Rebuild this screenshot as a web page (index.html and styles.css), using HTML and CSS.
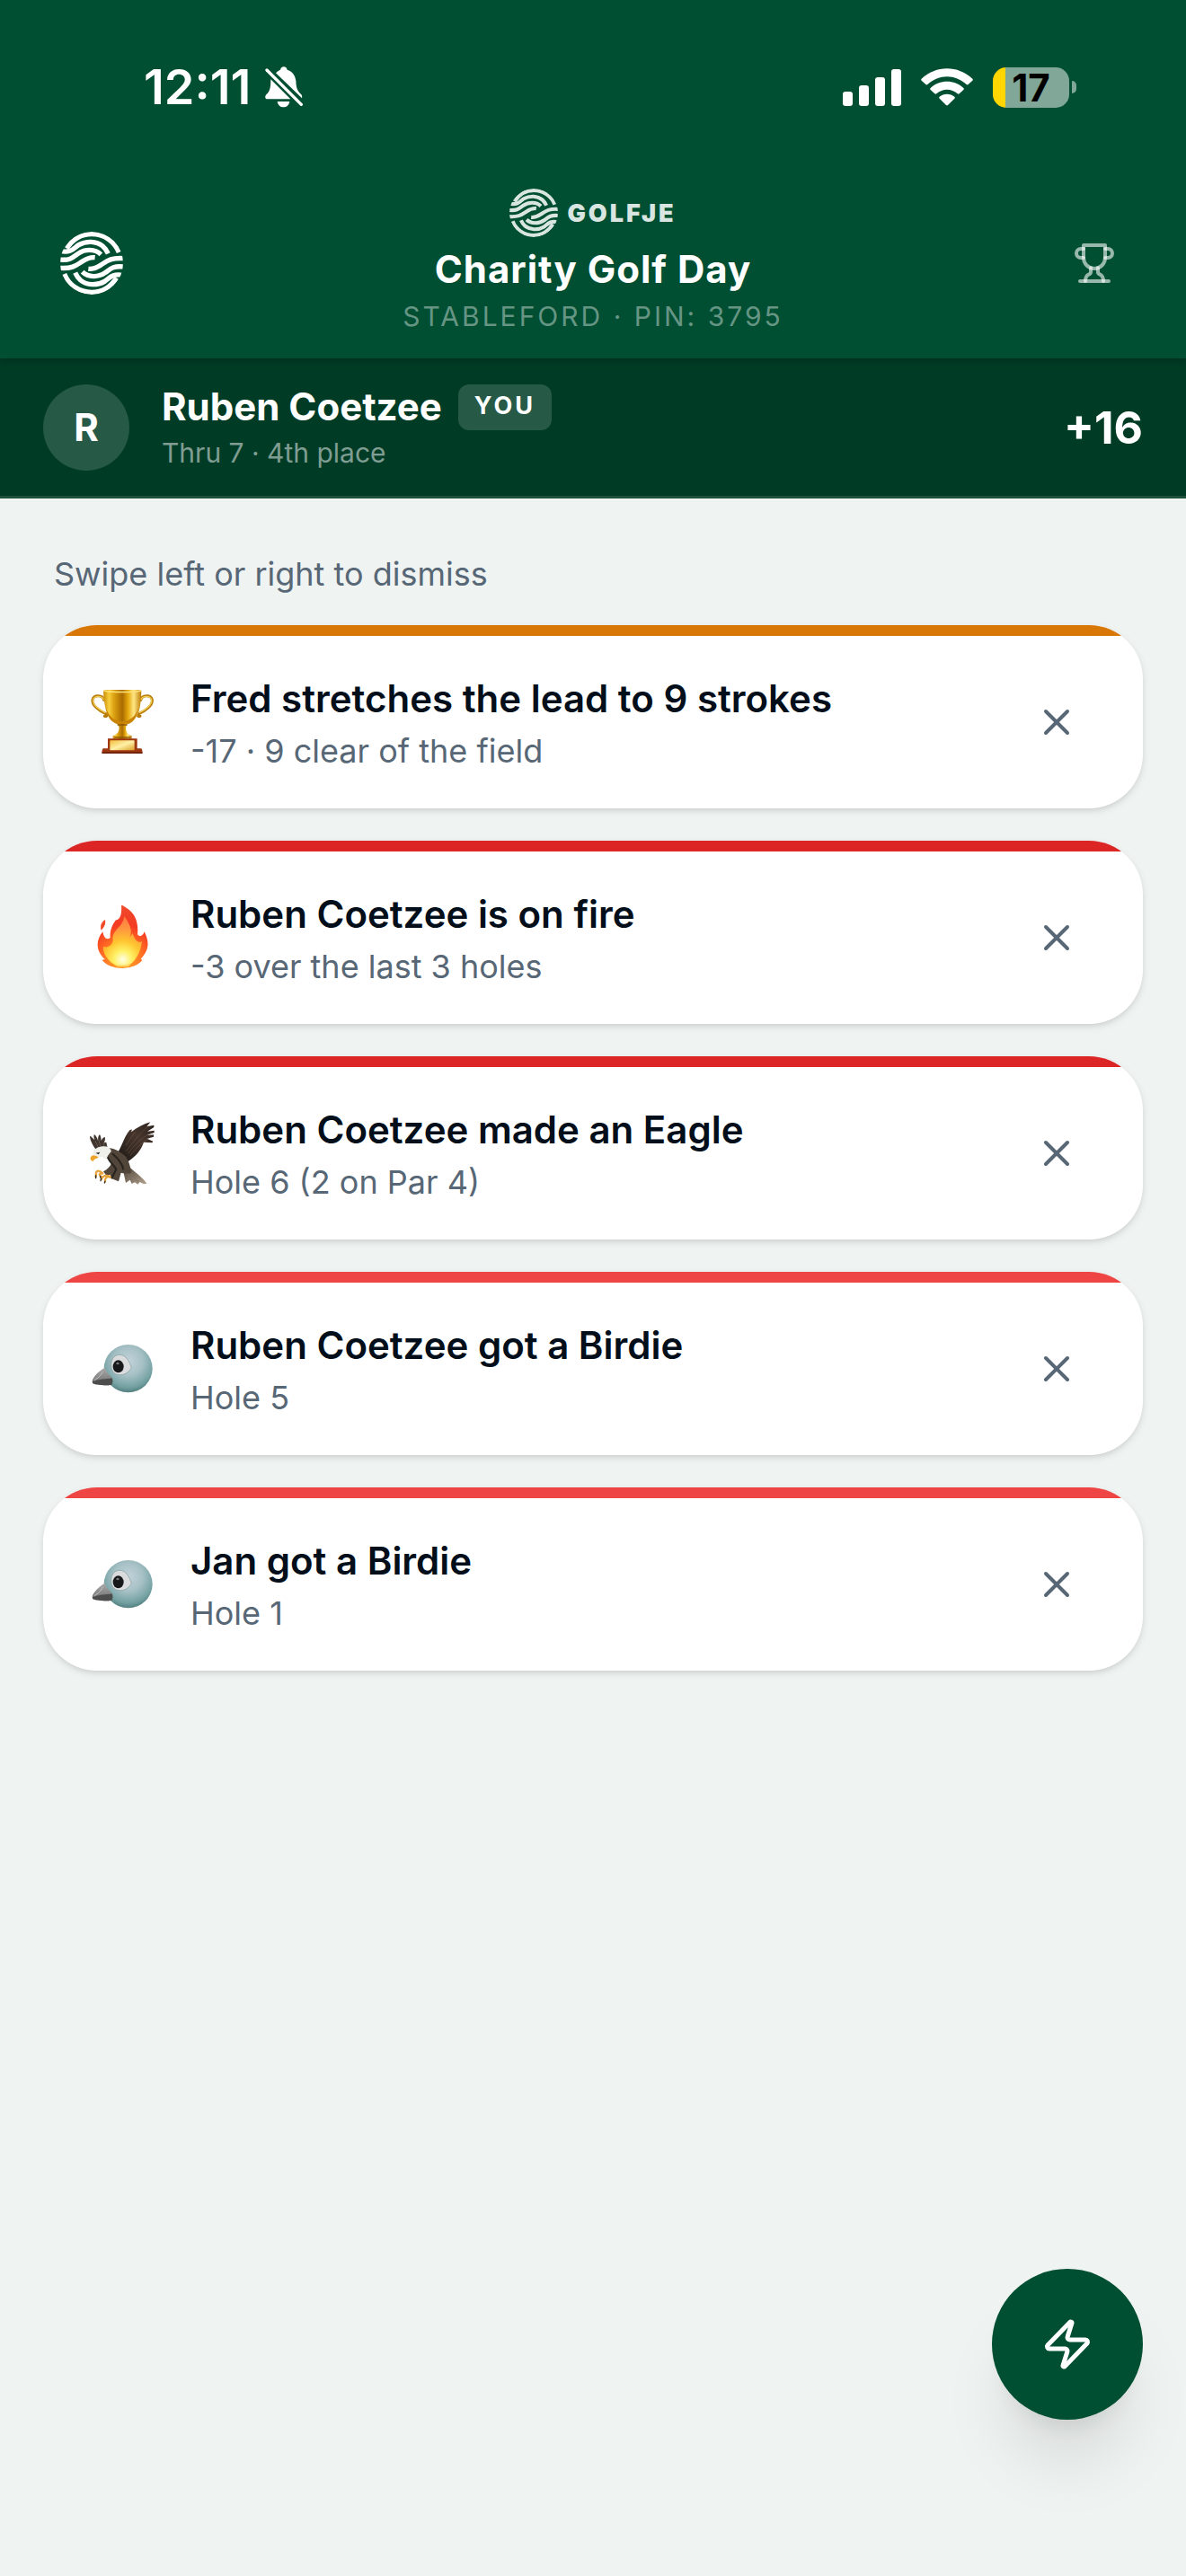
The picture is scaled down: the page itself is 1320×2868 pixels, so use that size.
FILE: index.html
```html
<!DOCTYPE html>
<html lang="en">
<head>
    <meta charset="UTF-8">
    <meta name="viewport" content="width=device-width, initial-scale=1.0">
    <title>Charity Golf Day</title>
    <link rel="stylesheet" href="styles.css">
</head>
<body>

    <!-- shared shapes -->
    <svg class="sprite" aria-hidden="true">
        <symbol id="logo" viewBox="0 0 210 210">
            <clipPath id="logoClip"><circle cx="105" cy="105" r="105"/></clipPath>
            <g clip-path="url(#logoClip)" fill="none" stroke="currentColor" stroke-width="16">
                <path d="M22 56C42 25 72 8 105 8C146 8 182 32 196 69"/>
                <path d="M0 65C40 72 45 54 62 44C88 29 121 31 142 48C149 54 155 62 160 73"/>
                <path d="M-2 93C36 97 44 84 60 73C82 58 116 56 136 76"/>
                <path d="M-2 121C42 124 54 112 74 99C86 91 97 84 116 86"/>
                <path d="M188 154C168 185 138 202 105 202C64 202 28 178 14 141"/>
                <path d="M210 145C170 138 165 156 148 166C122 181 89 179 68 162C61 156 55 148 50 137"/>
                <path d="M212 117C174 113 166 126 150 137C128 152 94 154 74 134"/>
                <path d="M212 89C168 86 156 98 136 111C124 119 113 126 94 124"/>
            </g>
        </symbol>
        <symbol id="close" viewBox="0 0 24 24">
            <path d="M18 6 6 18M6 6l12 12" fill="none" stroke="currentColor" stroke-width="2" stroke-linecap="round"/>
        </symbol>
        <symbol id="bird" viewBox="60 84 216 216">
            <defs>
                <radialGradient id="birdHead" cx=".5" cy=".35" r=".68">
                    <stop offset="0" stop-color="#c3d3da"/>
                    <stop offset=".45" stop-color="#a5c0c5"/>
                    <stop offset=".8" stop-color="#72a0a1"/>
                    <stop offset="1" stop-color="#4b7476"/>
                </radialGradient>
                <linearGradient id="birdBeak" x1="0" y1="0" x2="0" y2="1">
                    <stop offset="0" stop-color="#aaa"/>
                    <stop offset=".6" stop-color="#858585"/>
                    <stop offset="1" stop-color="#444"/>
                </linearGradient>
            </defs>
            <ellipse cx="188" cy="191" rx="81" ry="80" fill="url(#birdHead)"/>
            <path d="M131 178C132 157 143 145 160 145C180 145 192 166 199 188C190 204 176 214 156 212C140 210 131 198 131 178Z" fill="#d9dbdc" stroke="#7c999b" stroke-width="2"/>
            <ellipse cx="155" cy="184" rx="18" ry="21" fill="#17181a"/>
            <ellipse cx="153" cy="174" rx="5" ry="4" fill="#777"/>
            <path d="M110 188C92 198 72 216 68 233C68 241 76 244 88 244C106 247 126 249 133 244C139 232 135 220 127 214C119 208 113 199 110 188Z" fill="url(#birdBeak)"/>
            <path d="M69 235C92 226 115 227 134 223C138 233 136 241 132 245C112 249 76 245 69 240Z" fill="#4d4d4d"/>
            <path d="M74 230C90 222 96 214 103 201" fill="none" stroke="#c7c7c7" stroke-width="3"/>
        </symbol>
    </svg>

    <header class="header">
        <div class="status-bar">
            <div class="status-left">
                <span class="time">12:11</span>
                <svg class="bell" viewBox="0 0 126 138" aria-hidden="true">
                    <path fill="#fff" d="M36 22C42 15 47 13 51 11C53 4 57 1 62 1C68 1 72 4 74 11C91 16 101 30 103 48C104 72 108 82 121 94C124 98 124 102 123 106Z"/>
                    <path fill="#fff" d="M19 43L85 109H8C-1 109-1 99 4 94C16 83 19 73 19 43Z"/>
                    <path fill="#fff" d="M41 117H82C80 129 72 136 61 136C51 136 43 129 41 117Z"/>
                    <path stroke="#fff" stroke-width="10" stroke-linecap="round" d="M6 12 121 127"/>
                </svg>
            </div>
            <div class="status-right">
                <svg class="signal" viewBox="0 0 65 42" fill="#fff" aria-hidden="true">
                    <rect x="0" y="26" width="11" height="16" rx="3"/>
                    <rect x="18" y="19" width="11" height="23" rx="3"/>
                    <rect x="36" y="10" width="11" height="32" rx="3"/>
                    <rect x="54" y="1" width="11" height="41" rx="3"/>
                </svg>
                <svg class="wifi" viewBox="0 0 174 126" fill="#fff" aria-hidden="true">
                    <path d="M2 35C50-11 124-11 172 35C174 37 174 39 172 41L158 54C156 56 154 56 152 54C114 19 60 19 22 54C20 56 18 56 16 54L2 41C0 39 0 37 2 35Z"/>
                    <path d="M32 66C63 37 111 37 142 66C144 68 144 70 142 72L128 85C126 87 124 87 122 85C101 67 73 67 52 85C50 87 48 87 46 85L32 72C30 70 30 68 32 66Z"/>
                    <path d="M62 95C76 83 98 83 112 95C114 97 114 99 112 101L90 123C88 125 86 125 84 123L62 101C60 99 60 97 62 95Z"/>
                </svg>
                <div class="battery">
                    <span class="battery-body">17</span>
                    <span class="battery-knob"></span>
                </div>
            </div>
        </div>

        <div class="header-row">
            <a class="header-button" href="#" aria-label="Home">
                <svg class="home-logo"><use href="#logo"/></svg>
            </a>
            <div class="header-center">
                <div class="brand">
                    <svg class="brand-logo"><use href="#logo"/></svg>
                    <span>GOLFJE</span>
                </div>
                <h1>Charity Golf Day</h1>
                <p class="event-info">STABLEFORD · PIN: 3795</p>
            </div>
            <button class="header-button" type="button" aria-label="Leaderboard">
                <svg class="trophy-icon" viewBox="0 0 24 24">
                    <path d="M6 9H4.500a2.500 2.500 0 0 1 0-5H6"/>
                    <path d="M18 9h1.500a2.500 2.500 0 0 0 0-5H18"/>
                    <path d="M4 22h16"/>
                    <path d="M10 14.660V17c0 .55-.47.98-.97 1.210C7.850 18.750 7 20.240 7 22"/>
                    <path d="M14 14.660V17c0 .55.47.98.97 1.210C16.150 18.750 17 20.240 17 22"/>
                    <path d="M18 2H6v7a6 6 0 0 0 12 0V2Z"/>
                </svg>
            </button>
        </div>
    </header>

    <section class="player-bar">
        <div class="avatar">R</div>
        <div class="player-info">
            <div class="player-name">
                <strong>Ruben Coetzee</strong>
                <span class="badge">YOU</span>
            </div>
            <p>Thru 7 · 4th place</p>
        </div>
        <div class="score">+16</div>
    </section>

    <main>
        <p class="hint">Swipe left or right to dismiss</p>

        <div class="feed">
            <article class="card lead">
                <div class="card-body">
                    <svg class="emoji" viewBox="210 264 216 216" aria-hidden="true">
                        <defs>
                            <linearGradient id="gold">
                                <stop offset="0" stop-color="#c98c08"/>
                                <stop offset=".15" stop-color="#f6ce3c"/>
                                <stop offset=".28" stop-color="#dca112"/>
                                <stop offset=".5" stop-color="#a96b00"/>
                                <stop offset=".65" stop-color="#e5a80c"/>
                                <stop offset=".8" stop-color="#ffe684"/>
                                <stop offset="1" stop-color="#bd7c04"/>
                            </linearGradient>
                            <linearGradient id="plate" x1="0" y1="0" x2="1" y2="1">
                                <stop offset="0" stop-color="#f2bd3a"/>
                                <stop offset=".5" stop-color="#fff0a8"/>
                                <stop offset="1" stop-color="#dba026"/>
                            </linearGradient>
                        </defs>
                        <g fill="none" stroke-linecap="round">
                            <path d="M257 298C253 280 224 279 219 297C216 315 240 334 262 343C270 347 268 355 259 352M380 298C384 280 413 279 418 297C421 315 397 334 375 343C367 347 369 355 378 352" stroke="#b57a08" stroke-width="9"/>
                            <path d="M256 296C249 282 226 283 221 297C218 313 240 331 261 340M381 296C388 282 411 283 416 297C419 313 397 331 376 340" stroke="#f3ce55" stroke-width="4"/>
                        </g>
                        <path d="M255 266C280 260 358 260 382 266C380 325 374 369 331 379H306C266 368 258 323 255 266Z" fill="url(#gold)"/>
                        <path d="M256 267C285 273 353 273 381 267" fill="none" stroke="#ffe27a" stroke-width="4"/>
                        <path d="M262 322C275 357 293 368 318 370C345 368 364 353 373 322C366 367 347 377 331 380H306C280 374 267 352 262 322Z" fill="#c98305"/>
                        <path d="M302 377H335L331 387C329 402 333 411 350 418V431H287V418C304 411 309 402 307 387Z" fill="url(#gold)"/>
                        <path d="M302 381H335M292 423H346" stroke="#8d5800" stroke-width="4"/>
                        <path d="M270 427H368V460H382Q386 464 386 476H250Q250 464 254 460H270Z" fill="#9c3710"/>
                        <path d="M251 472H385V477H251Z" fill="#6d210a"/>
                        <rect x="277" y="433" width="82" height="33" rx="2" fill="url(#plate)"/>
                    </svg>
                    <div class="card-text">
                        <h2>Fred stretches the lead to 9 strokes</h2>
                        <p>-17 · 9 clear of the field</p>
                    </div>
                    <button class="close-button" type="button" aria-label="Dismiss"><svg><use href="#close"/></svg></button>
                </div>
            </article>

            <article class="card hot">
                <div class="card-body">
                    <svg class="emoji" viewBox="60 84 216 216" aria-hidden="true">
                        <defs>
                            <radialGradient id="flameOuter" gradientUnits="userSpaceOnUse" cx="170" cy="265" r="180">
                                <stop offset="0" stop-color="#ffb224"/>
                                <stop offset=".4" stop-color="#ff6a24"/>
                                <stop offset=".65" stop-color="#f43a22"/>
                                <stop offset="1" stop-color="#ef4a2c"/>
                            </radialGradient>
                            <radialGradient id="flameInner" gradientUnits="userSpaceOnUse" cx="170" cy="265" r="150">
                                <stop offset="0" stop-color="#fffde5"/>
                                <stop offset=".2" stop-color="#fff164"/>
                                <stop offset=".42" stop-color="#ffc430"/>
                                <stop offset=".7" stop-color="#ff9440"/>
                                <stop offset="1" stop-color="#ff7743"/>
                            </radialGradient>
                        </defs>
                        <path d="M98 167C93 153 98 140 111 132C114 148 107 157 98 167Z" fill="#f04a2b"/>
                        <path d="M165 82C202 101 224 126 219 181C223 189 236 190 242 172C258 205 260 230 230 263L235 267C223 281 206 292 169 294C134 293 114 282 101 267L110 264C82 239 77 204 103 172C106 192 117 202 128 192C126 168 136 147 147 133C158 132 168 120 165 82Z" fill="url(#flameOuter)"/>
                        <path d="M175 120C191 143 205 167 193 190C204 178 202 177 203 176C210 204 226 212 234 203C231 231 222 250 207 270C198 285 150 287 134 277C115 260 103 242 105 221C117 228 137 218 137 198C133 166 170 159 175 120Z" fill="url(#flameInner)"/>
                        <path d="M170 182C178 207 203 220 210 207C222 231 205 279 188 289H151C125 274 124 243 130 220C139 235 168 222 170 182Z" fill="url(#flameInner)" opacity=".7"/>
                    </svg>
                    <div class="card-text">
                        <h2>Ruben Coetzee is on fire</h2>
                        <p>-3 over the last 3 holes</p>
                    </div>
                    <button class="close-button" type="button" aria-label="Dismiss"><svg><use href="#close"/></svg></button>
                </div>
            </article>

            <article class="card hot">
                <div class="card-body">
                    <svg class="emoji" viewBox="60 84 216 216" aria-hidden="true">
                        <defs>
                            <linearGradient id="wing" x1="0" y1="1" x2="1" y2="0">
                                <stop offset="0" stop-color="#191513"/>
                                <stop offset=".6" stop-color="#46362d"/>
                                <stop offset="1" stop-color="#2a211d"/>
                            </linearGradient>
                            <linearGradient id="tail" x1="0" y1="0" x2="1" y2="1">
                                <stop offset="0" stop-color="#4a3f34"/>
                                <stop offset="1" stop-color="#b5a591"/>
                            </linearGradient>
                        </defs>
                        <path d="M82 181C68 166 60 145 60 134C66 136 71 143 76 148C73 140 72 134 75 129C82 134 85 143 87 149C87 140 88 133 93 129C97 136 98 145 98 150C102 142 106 137 111 139C112 146 109 152 107 158C111 155 115 153 116 158C116 170 124 177 127 185L105 192Z" fill="#40362f"/>
                        <path d="M78 151L91 177M88 143L98 176M109 154L104 178" stroke="#74695d" stroke-width="2"/>
                        <path d="M169 239L180 291L194 281L200 294L210 289L220 296L227 288L240 295L250 293C240 276 211 254 193 239Z" fill="url(#tail)"/>
                        <path d="M182 254L202 286M187 249L222 288" stroke="#796c5e" stroke-width="2"/>
                        <path d="M142 205C166 178 169 145 193 115L201 112L198 121C220 105 240 94 262 88L250 103L274 98V105L252 119L275 116V123L250 132L273 130V137L251 143L271 152L268 157L240 155C230 184 211 203 193 215C180 228 171 214 142 205Z" fill="url(#wing)"/>
                        <path d="M181 185C201 160 225 126 256 101M188 193C209 164 230 142 267 122M195 199C214 176 229 160 257 142M180 166L210 122" fill="none" stroke="#6d5141" stroke-width="2"/>
                        <path d="M113 176C138 170 158 185 180 203C189 215 197 239 198 257C184 262 171 258 164 257L156 286L131 276L128 263L115 266L105 253C120 244 129 235 132 224C119 212 112 199 113 176Z" fill="#514639"/>
                        <path d="M118 203C128 227 145 234 148 246L132 276M135 193C153 209 170 229 172 247" fill="none" stroke="#28231f" stroke-width="6"/>
                        <path d="M70 202C68 181 82 171 102 169C117 167 127 172 132 185C126 192 119 198 116 213L99 204L84 207Z" fill="#f0f0eb"/>
                        <path d="M66 201C75 198 87 201 88 207C80 210 73 212 71 219C61 216 59 207 66 201Z" fill="#eda42a"/>
                        <path d="M79 191L94 188L89 196Z" fill="#292929"/>
                        <path d="M103 259C91 248 83 249 81 258L80 270M101 260C89 257 91 265 98 270M127 269C110 263 102 270 98 279M128 272C118 266 109 276 111 286" fill="none" stroke="#e6a23b" stroke-width="7" stroke-linecap="round"/>
                        <path d="M80 266V275M95 268L96 274M98 277L96 284M111 286L109 291" stroke="#292929" stroke-width="4" stroke-linecap="round"/>
                    </svg>
                    <div class="card-text">
                        <h2>Ruben Coetzee made an Eagle</h2>
                        <p>Hole 6 (2 on Par 4)</p>
                    </div>
                    <button class="close-button" type="button" aria-label="Dismiss"><svg><use href="#close"/></svg></button>
                </div>
            </article>

            <article class="card birdie">
                <div class="card-body">
                    <svg class="emoji" aria-hidden="true"><use href="#bird"/></svg>
                    <div class="card-text">
                        <h2>Ruben Coetzee got a Birdie</h2>
                        <p>Hole 5</p>
                    </div>
                    <button class="close-button" type="button" aria-label="Dismiss"><svg><use href="#close"/></svg></button>
                </div>
            </article>

            <article class="card birdie">
                <div class="card-body">
                    <svg class="emoji" aria-hidden="true"><use href="#bird"/></svg>
                    <div class="card-text">
                        <h2>Jan got a Birdie</h2>
                        <p>Hole 1</p>
                    </div>
                    <button class="close-button" type="button" aria-label="Dismiss"><svg><use href="#close"/></svg></button>
                </div>
            </article>
        </div>
    </main>

    <button class="fab" type="button" aria-label="Quick actions">
        <svg viewBox="0 0 24 24">
            <path d="M4 14a1 1 0 0 1-.78-1.630l9.900-10.200a.5.5 0 0 1 .86.46l-1.920 6.020A1 1 0 0 0 13 10h7a1 1 0 0 1 .78 1.630l-9.900 10.200a.5.5 0 0 1-.86-.46l1.920-6.020A1 1 0 0 0 11 14z"/>
        </svg>
    </button>

</body>
</html>
```
FILE: styles.css
```css
* {
    box-sizing: border-box;
}
body {
    margin: 0;
    min-height: 100vh;
    font-family: Inter, "Liberation Sans", sans-serif;
    background-color: #eff3f2;
    color: #020e1a;
}
h1, h2, p {
    margin: 0;
}
button {
    padding: 0;
    border: none;
    background: none;
    font-family: inherit;
    cursor: pointer;
}
svg {
    display: block;
    flex-shrink: 0;
}
.sprite {
    position: absolute;
    width: 0;
    height: 0;
}

/* HEADER */
.header {
    position: relative;
    background-color: #004f32;
    color: #fff;
    box-shadow: 0 3px 9px rgba(0,0,0,0.2);
}
.status-bar {
    display: flex;
    align-items: center;
    justify-content: space-between;
    padding: 60px 122px 52px 160px;
}
.status-left {
    display: flex;
    align-items: center;
    gap: 16px;
}
.time {
    font-size: 54px;
    font-weight: 600;
    line-height: 74px;
}
.bell {
    width: 42px;
    height: 46px;
}
.status-right {
    display: flex;
    align-items: center;
    gap: 22px;
}
.signal {
    width: 65px;
    height: 42px;
}
.wifi {
    width: 58px;
    height: 42px;
}
.battery {
    display: flex;
    align-items: center;
    gap: 3px;
}
.battery-body {
    width: 85px;
    height: 45px;
    border-radius: 15px;
    background: linear-gradient(to right, #ffd600 14px, #80a798 14px);
    color: #000;
    font-size: 42px;
    font-weight: 700;
    line-height: 45px;
    text-align: center;
}
.battery-knob {
    width: 5px;
    height: 14px;
    border-radius: 0 7px 7px 0;
    background-color: #80a798;
}
.header-row {
    display: flex;
    align-items: center;
    justify-content: space-between;
    padding: 24px 48px;
}
.header-button {
    display: flex;
    align-items: center;
    justify-content: center;
    width: 108px;
    height: 108px;
    color: #fff;
}
.home-logo {
    width: 70px;
    height: 70px;
}
.trophy-icon {
    width: 48px;
    height: 48px;
    fill: none;
    stroke: rgba(255,255,255,0.6);
    stroke-width: 2;
    stroke-linecap: round;
    stroke-linejoin: round;
}
.header-center {
    text-align: center;
}
.brand {
    display: flex;
    align-items: center;
    justify-content: center;
    gap: 10px;
    height: 54px;
    margin-bottom: 9px;
    color: #d9e5e0;
    font-size: 27px;
    font-weight: 900;
    letter-spacing: 3px;
}
.brand-logo {
    width: 54px;
    height: 54px;
}
h1 {
    font-size: 42px;
    font-weight: 700;
    line-height: 54px;
    letter-spacing: 1px;
}
.event-info {
    margin-top: 3px;
    color: #669584;
    font-size: 30px;
    line-height: 45px;
    letter-spacing: 3px;
}

/* CURRENT PLAYER */
.player-bar {
    display: flex;
    align-items: center;
    gap: 36px;
    padding: 27px 48px;
    border-bottom: 3px solid #1f523d;
    background-color: #003c25;
    color: #fff;
}
.avatar {
    width: 96px;
    height: 96px;
    border-radius: 50%;
    background-color: #265946;
    font-size: 42px;
    font-weight: 700;
    line-height: 96px;
    text-align: center;
}
.player-info {
    flex: 1;
}
.player-name {
    display: flex;
    align-items: center;
    gap: 18px;
    font-size: 42px;
    line-height: 54px;
}
.player-name strong {
    font-weight: 700;
}
.badge {
    padding: 3px 18px 6px;
    border-radius: 12px;
    background-color: #265946;
    font-size: 27px;
    font-weight: 700;
    line-height: 42px;
    letter-spacing: 3px;
}
.player-info p {
    margin-top: 3px;
    color: #7f9d92;
    font-size: 30px;
    line-height: 42px;
}
.score {
    font-size: 50px;
    font-weight: 700;
}

/* NOTIFICATIONS */
main {
    padding: 57px 48px;
}
.hint {
    margin-bottom: 30px;
    padding: 0 12px;
    color: #576776;
    font-size: 36px;
    line-height: 54px;
}
.feed {
    display: flex;
    flex-direction: column;
    gap: 36px;
}
.card {
    overflow: hidden;
    border-radius: 60px;
    background-color: #fff;
    box-shadow: 0 3px 9px rgba(0,0,0,0.1), 0 3px 6px -3px rgba(0,0,0,0.1);
}
.card::before {
    content: "";
    display: block;
    height: 12px;
}
.card.lead::before {
    background-color: #d97706;
}
.card.hot::before {
    background-color: #dc2626;
}
.card.birdie::before {
    background-color: #ef4444;
}
.card-body {
    display: flex;
    align-items: center;
    gap: 36px;
    min-height: 192px;
    padding: 36px 48px;
}
.emoji {
    width: 80px;
    height: 72px;
}
.card-text {
    flex: 1;
}
h2 {
    font-size: 42px;
    font-weight: 600;
    line-height: 63px;
}
.card-text p {
    color: #576776;
    font-size: 36px;
    line-height: 54px;
}
.close-button {
    display: flex;
    align-items: center;
    justify-content: center;
    width: 96px;
    height: 96px;
    color: #576776;
}
.close-button svg {
    width: 48px;
    height: 48px;
}

/* FLOATING BUTTON */
.fab {
    position: fixed;
    right: 48px;
    bottom: 174px;
    display: flex;
    align-items: center;
    justify-content: center;
    width: 168px;
    height: 168px;
    border-radius: 50%;
    background-color: #004f32;
    box-shadow: 0 60px 75px -15px rgba(0,0,0,0.1), 0 24px 30px -18px rgba(0,0,0,0.1);
}
.fab svg {
    width: 60px;
    height: 60px;
    fill: none;
    stroke: #fff;
    stroke-width: 2;
    stroke-linecap: round;
    stroke-linejoin: round;
}
```
